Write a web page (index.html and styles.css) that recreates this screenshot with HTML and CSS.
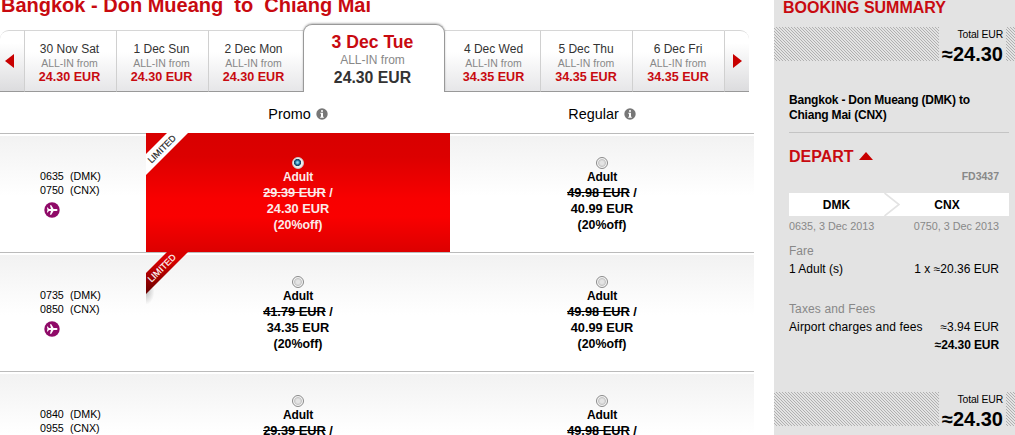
FILE: index.html
```html
<!DOCTYPE html>
<html lang="en">
<head>
    <meta charset="UTF-8">
    <title>Select flights</title>
    <link rel="stylesheet" href="styles.css">
</head>
<body>

    <svg class="symbols" width="0" height="0">
        <symbol id="info" viewBox="0 0 12 12">
            <circle cx="6" cy="6" r="5.7" fill="#777"/>
            <path d="M5 2.2h2v1.6H5zM4.3 4.8H7v3.9h.8v1H4.2v-1H5V5.8h-.7z" fill="#fff"/>
        </symbol>
        <symbol id="plane" viewBox="0 0 16 16">
            <circle cx="8" cy="8" r="7.7" fill="#8f0a68"/>
            <path d="M13.5 8c0-.6-.7-1-1.5-1H9.6L7.3 3.2H5.9L7 7H4.9L3.8 5.6h-.9L3.5 8l-.6 2.4h.9L4.9 9H7l-1.1 3.8h1.4L9.6 9H12c.8 0 1.5-.4 1.5-1z" fill="#fff"/>
        </symbol>
    </svg>

    <div class="page">
        <div class="main">
            <h1>Bangkok - Don Mueang&nbsp; to&nbsp; Chiang Mai</h1>

            <div class="dates">
                <div class="arrow prev"><i></i></div>
                <div class="date"><span class="day">30 Nov Sat</span><span class="from">ALL-IN from</span><b>24.30 EUR</b></div>
                <div class="date"><span class="day">1 Dec Sun</span><span class="from">ALL-IN from</span><b>24.30 EUR</b></div>
                <div class="date"><span class="day">2 Dec Mon</span><span class="from">ALL-IN from</span><b>24.30 EUR</b></div>
                <div class="date active"><span class="day">3 Dec Tue</span><span class="from">ALL-IN from</span><b>24.30 EUR</b></div>
                <div class="date"><span class="day">4 Dec Wed</span><span class="from">ALL-IN from</span><b>34.35 EUR</b></div>
                <div class="date"><span class="day">5 Dec Thu</span><span class="from">ALL-IN from</span><b>34.35 EUR</b></div>
                <div class="date"><span class="day">6 Dec Fri</span><span class="from">ALL-IN from</span><b>34.35 EUR</b></div>
                <div class="arrow next"><i></i></div>
            </div>

            <div class="heads">
                <div class="head">Promo <svg class="info"><use href="#info"/></svg></div>
                <div class="head">Regular <svg class="info"><use href="#info"/></svg></div>
            </div>

            <div class="flight">
                <div class="times">
                    <p><span>0635</span>(DMK)</p>
                    <p><span>0750</span>(CNX)</p>
                    <svg class="plane"><use href="#plane"/></svg>
                </div>
                <div class="fare selected">
                    <div class="ribbon"><span>LIMITED</span></div>
                    <i class="radio on"></i>
                    <span class="who">Adult</span>
                    <span><s>29.39 EUR</s> /</span>
                    <span>24.30 EUR</span>
                    <span class="off">(20%off)</span>
                </div>
                <div class="fare">
                    <i class="radio"></i>
                    <span class="who">Adult</span>
                    <span><s>49.98 EUR</s> /</span>
                    <span>40.99 EUR</span>
                    <span class="off">(20%off)</span>
                </div>
            </div>

            <div class="flight">
                <div class="times">
                    <p><span>0735</span>(DMK)</p>
                    <p><span>0850</span>(CNX)</p>
                    <svg class="plane"><use href="#plane"/></svg>
                </div>
                <div class="fare">
                    <div class="ribbon-shadow"></div>
                    <div class="ribbon red"><span>LIMITED</span></div>
                    <i class="radio"></i>
                    <span class="who">Adult</span>
                    <span><s>41.79 EUR</s> /</span>
                    <span>34.35 EUR</span>
                    <span class="off">(20%off)</span>
                </div>
                <div class="fare">
                    <i class="radio"></i>
                    <span class="who">Adult</span>
                    <span><s>49.98 EUR</s> /</span>
                    <span>40.99 EUR</span>
                    <span class="off">(20%off)</span>
                </div>
            </div>

            <div class="flight">
                <div class="times">
                    <p><span>0840</span>(DMK)</p>
                    <p><span>0955</span>(CNX)</p>
                </div>
                <div class="fare">
                    <i class="radio"></i>
                    <span class="who">Adult</span>
                    <span><s>29.39 EUR</s> /</span>
                </div>
                <div class="fare">
                    <i class="radio"></i>
                    <span class="who">Adult</span>
                    <span><s>49.98 EUR</s> /</span>
                </div>
            </div>
        </div>

        <div class="summary">
            <h2>BOOKING SUMMARY</h2>
            <div class="total">
                <div class="amount"><span>Total EUR</span><b>≈24.30</b></div>
            </div>
            <div class="details">
                <p class="route">Bangkok - Don Mueang (DMK) to<br>Chiang Mai (CNX)</p>
                <h3>DEPART <i></i></h3>
                <p class="number">FD3437</p>
                <div class="leg">
                    <span class="origin">DMK</span>
                    <svg class="chevron" viewBox="0 0 16 23"><path d="M.5 0L15 11.5.5 23" fill="none" stroke="#e3e3e3" stroke-width="1.6"/></svg>
                    <span class="dest">CNX</span>
                </div>
                <div class="row when"><span>0635, 3 Dec 2013</span><span>0750, 3 Dec 2013</span></div>
                <p class="label">Fare</p>
                <div class="row"><span>1 Adult (s)</span><span>1 x ≈20.36 EUR</span></div>
                <p class="label taxes">Taxes and Fees</p>
                <div class="row"><span>Airport charges and fees</span><span>≈3.94 EUR</span></div>
                <div class="row sum"><b>≈24.30 EUR</b></div>
            </div>
            <div class="total">
                <div class="amount"><span>Total EUR</span><b>≈24.30</b></div>
            </div>
        </div>
    </div>

</body>
</html>
```
FILE: styles.css
```css
* {
    box-sizing: border-box;
}
body {
    margin: 0;
    background: #fff;
    color: #000;
    font-family: "Liberation Sans", Arial, sans-serif;
    font-size: 12px;
    overflow: hidden;
}
h1, h2, h3, p {
    margin: 0;
}
.symbols {
    display: none;
}
.page {
    display: flex;
    justify-content: space-between;
    height: 435px;
    overflow: hidden;
}
.main {
    width: 754px;
}
h1 {
    height: 24px;
    margin-top: -6px;
    padding-left: 1px;
    font-size: 20px;
    line-height: 22px;
    color: #c80a10;
    white-space: nowrap;
}

/* date tabs */
.dates {
    display: flex;
    align-items: flex-end;
    width: 749px;
    height: 74px;
}
.date, .arrow {
    height: 62px;
    border-top: 1px solid #d6d6d6;
    border-bottom: 1px solid #999;
    border-left: 1px solid #d0d0d0;
    background: linear-gradient(#fff 35%, #e6e6e8);
}
.date {
    display: flex;
    flex-direction: column;
    align-items: center;
    width: 92px;
    padding-top: 11px;
    padding-right: 2px;
    line-height: 14px;
    color: #333;
}
.date:nth-child(4), .date:nth-child(6) {
    width: 95px;
}
.date:nth-child(4) {
    padding-right: 5px;
}
.date:nth-child(6) {
    padding-left: 4px;
    border-left: 0;
}
.date:nth-child(n+7) {
    padding-right: 1px;
}
.date .from {
    font-size: 10.5px;
    color: #888;
}
.date b {
    font-size: 12.6px;
    line-height: 15px;
    color: #c80a10;
}
.date.active {
    width: 142px;
    height: 68px;
    padding-top: 7px;
    padding-right: 3px;
    border: 1px solid #999;
    border-bottom: 0;
    border-radius: 9px 9px 0 0;
    background: #fff;
    box-shadow: 0 -1px 2px rgba(0, 0, 0, 0.25);
    clip-path: inset(-4px -4px 0 -4px);
}
.date.active .day {
    font-size: 17.6px;
    font-weight: bold;
    line-height: 20px;
    color: #c80a10;
}
.date.active .from {
    font-size: 12px;
    line-height: 16px;
}
.date.active b {
    font-size: 15.8px;
    line-height: 19px;
    color: #333;
}
.arrow {
    display: flex;
    align-items: center;
    width: 25px;
    background: linear-gradient(#fff 20%, #dcdcde);
}
.prev {
    width: 24px;
    padding-left: 5px;
    border-left: 0;
    border-top-left-radius: 9px;
}
.next {
    padding-left: 8px;
    border-top-right-radius: 9px;
}
.arrow i {
    border: 7px solid transparent;
}
.prev i {
    border-left: 0;
    border-right: 9px solid #c80000;
}
.next i {
    border-right: 0;
    border-left: 9px solid #c80000;
}

/* fare table */
.heads {
    display: flex;
    height: 41px;
    padding: 11px 0 0 146px;
}
.head {
    display: flex;
    justify-content: center;
    width: 304px;
    gap: 5px;
    font-size: 14.4px;
    line-height: 22px;
}
.info {
    width: 12px;
    height: 12px;
    margin-top: 5px;
}
.flight {
    display: flex;
    height: 119px;
    border-top: 1px solid #bbb;
    background: linear-gradient(#fff 2px, #f2f2f2 2px, #fff 62px);
}
.times {
    width: 146px;
    padding: 35px 0 0 40px;
    font-size: 10.7px;
    line-height: 14px;
}
.times span {
    display: inline-block;
    width: 30px;
}
.plane {
    display: block;
    width: 16px;
    height: 16px;
    margin: 5px 0 0 4px;
}
.fare {
    position: relative;
    display: flex;
    flex-direction: column;
    align-items: center;
    width: 304px;
    height: 119px;
    margin-top: -1px;
    padding-top: 24px;
    font-size: 12.8px;
    font-weight: bold;
    line-height: 16px;
}
.fare .who {
    margin-top: 1px;
    font-size: 12px;
    line-height: 15px;
    letter-spacing: -0.1px;
}
.fare .off {
    font-size: 12.4px;
}
.selected {
    background: linear-gradient(#d80000, #dc0000 20%, #f80000 55%, #fa0000 70%, #dc0000);
    color: #fbeaea;
}
.radio {
    width: 12px;
    height: 12px;
    border: 1px solid #8a8a8a;
    border-radius: 50%;
    background: radial-gradient(#e4e4e4 25%, #c8c8c8 50%, #f4f4f4 62%);
}
.radio.on {
    border-color: #ccc;
    background: radial-gradient(circle at 45% 45%, #8fdcf5 8%, #1c6e9c 28%, #173f5c 42%, #eee 50%);
}
.ribbon {
    position: absolute;
    top: 0;
    left: 0;
    width: 42px;
    height: 42px;
    background: #fff;
    color: #222;
    clip-path: polygon(50% 0, 100% 0, 0 100%, 0 50%);
}
.ribbon.red {
    background: linear-gradient(#d80000 20%, #600);
    color: #fff;
}
.ribbon-shadow {
    position: absolute;
    top: 36px;
    left: 0;
    width: 8px;
    height: 16px;
    background: radial-gradient(ellipse at 0 20%, #bbb, rgba(255, 255, 255, 0) 75%);
}
.ribbon span {
    position: absolute;
    top: 10px;
    left: -9px;
    width: 50px;
    font-size: 9px;
    font-weight: normal;
    line-height: 12px;
    text-align: center;
    -webkit-text-stroke: 0.2px;
    transform: rotate(-45deg);
}

/* booking summary */
.summary {
    width: 241px;
    background: #e3e3e3;
}
h2 {
    height: 27px;
    padding-left: 9px;
    font-size: 16px;
    line-height: 15px;
    color: #c80a10;
}
.total {
    display: flex;
    justify-content: flex-end;
    height: 34px;
    padding-right: 9px;
    background: repeating-linear-gradient(45deg, #b0b0b0 0 0.7px, #e3e3e3 0.7px 2.12px);
}
.amount {
    display: flex;
    flex-direction: column;
    align-items: flex-end;
    width: 67px;
    padding-right: 3px;
    background: #e3e3e3;
    font-size: 10.4px;
    line-height: 15px;
    letter-spacing: -0.15px;
}
.amount b {
    font-size: 20px;
    line-height: 24px;
    letter-spacing: 0;
}
.details {
    height: 331px;
    padding: 32px 6px 0 15px;
}
.route {
    height: 40px;
    border-bottom: 1px solid #c4c4c4;
    font-weight: bold;
    line-height: 15px;
    letter-spacing: -0.2px;
}
h3 {
    display: flex;
    align-items: center;
    gap: 5px;
    margin-top: 14px;
    font-size: 16px;
    line-height: 20px;
    color: #c80a10;
}
h3 i {
    margin-top: -2px;
    border: 7px solid transparent;
    border-top: 0;
    border-bottom: 8px solid #c80000;
}
.number {
    padding: 1px 10px 1px 0;
    font-size: 10.5px;
    font-weight: bold;
    line-height: 16px;
    text-align: right;
    color: #888;
}
.leg {
    display: flex;
    height: 23px;
    margin-top: 8px;
    background: #fff;
    font-weight: bold;
    line-height: 25px;
    text-align: center;
}
.origin {
    width: 95px;
}
.chevron {
    width: 16px;
    height: 23px;
}
.dest {
    width: 94px;
}
.row {
    display: flex;
    justify-content: space-between;
    padding-right: 10px;
    line-height: 18px;
}
.when {
    padding: 1px 10px 1px 0;
    font-size: 10.8px;
    color: #888;
}
.label {
    padding-top: 6px;
    line-height: 18px;
    color: #888;
}
.taxes {
    margin-top: 16px;
    letter-spacing: 0.12px;
}
.taxes + .row span:first-child {
    letter-spacing: 0.12px;
}
.sum {
    justify-content: flex-end;
    letter-spacing: -0.1px;
}
```
